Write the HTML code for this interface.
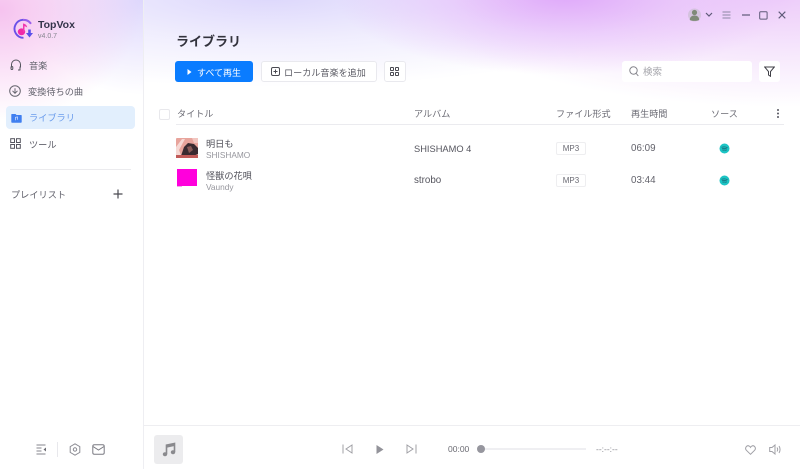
<!DOCTYPE html>
<html lang="ja">
<head>
<meta charset="utf-8">
<style>
html,body{margin:0;padding:0}
body{width:800px;height:469px;overflow:hidden;position:relative;background:#fff;font-family:"Liberation Sans","Noto Sans CJK JP",sans-serif;color:#3a3a45}
div,span,svg{position:absolute;display:block}
.bg{left:0;top:0;width:800px;height:125px;background:
 radial-gradient(ellipse 230px 80px at 565px -5px,rgba(222,165,250,.95),rgba(226,180,250,.5) 50%,rgba(255,255,255,0) 100%),
 radial-gradient(ellipse 360px 112px at 780px -5px,rgba(232,190,248,.8),rgba(240,215,250,.55) 55%,rgba(255,255,255,0) 100%),
 radial-gradient(ellipse 420px 92px at 270px -5px,rgba(218,212,252,.95),rgba(228,224,252,.55) 50%,rgba(255,255,255,0) 100%),
 linear-gradient(#fff,#fff)}
.sb{left:0;top:0;width:143px;height:469px;border-right:1px solid #eeeef2;background:
 radial-gradient(ellipse 140px 110px at 0px 10px,rgba(244,184,236,.85),rgba(255,255,255,0) 100%),
 radial-gradient(ellipse 120px 95px at 143px 0px,rgba(216,208,252,.85),rgba(255,255,255,0) 100%),#fff}
.t{white-space:nowrap;line-height:14px}
.n{font-size:9.200px;color:#62626c}
.h{font-size:9.100px;color:#6a6a73;top:107px}
.ic{fill:none;stroke:#55555f;stroke-width:1}
.tag{width:28px;height:11px;border:1px solid #eeeef0;border-radius:2px;font-size:8px;line-height:11px;text-align:center;color:#6a6a73;left:556px;background:#fff}
</style>
</head>
<body>
<div class="bg"></div>
<div class="sb"></div>

<!-- logo -->
<svg style="left:13px;top:18px" width="22" height="22" viewBox="0 0 22 22">
 <path d="M17.800 5.500A9 9 0 1 0 10.500 19.800" fill="none" stroke="#6a50e8" stroke-width="1.900"/>
 <path d="M10 2A9 9 0 0 1 18 5.800" fill="none" stroke="#9a60ec" stroke-width="1.900"/>
 <ellipse cx="8.500" cy="13.800" rx="3.700" ry="3.400" fill="#f02aa8"/><path d="M10 14V5.500c2 .3 4 1.500 4.200 4-1.300-1-2.400-1.200-2.700-1.200V14z" fill="#f03ab0"/>
 <path d="M15.200 11.500h2.600v3.500h2.200L16.500 19.500 13 15h2.200z" fill="#5b50ea"/>
</svg>
<div class="t" style="left:38px;top:18px;font-size:10.500px;font-weight:bold;color:#34344a">TopVox</div>
<div class="t" style="left:38px;top:30px;font-size:7px;color:#85858f">v4.0.7</div>

<!-- nav -->
<svg class="ic" style="left:10px;top:59px" width="12" height="12" viewBox="0 0 12 12"><path d="M1.500 8.500V5.500a4.500 4.500 0 0 1 9 0v3"/><rect x="1" y="7.500" width="1.800" height="3" rx=".9"/><path d="M10 7.500v3.500H8"/></svg>
<div class="t n" style="left:29px;top:59px">音楽</div>
<svg class="ic" style="left:9px;top:85px;stroke:#66666f" width="12" height="12" viewBox="0 0 12 12"><circle cx="6" cy="6" r="5.300"/><path d="M3.500 5.800L6 8.300l2.500-2.500M6 3.200v5"/></svg>
<div class="t n" style="left:28px;top:85px">変換待ちの曲</div>
<div style="left:6px;top:106px;width:129px;height:23px;background:#e2effd;border-radius:4px"></div>
<svg style="left:11px;top:112px" width="11" height="11" viewBox="0 0 11 11"><path d="M1 2h3.500l1 1H10a.7.7 0 0 1 .7.700V10a.7.7 0 0 1-.7.700H1A.7.7 0 0 1 .3 10V2.700A.7.7 0 0 1 1 2z" fill="#3f7ff0"/><path d="M4.500 8.300V5.300l2-.4v2.800" stroke="#dbe8ff" stroke-width=".7" fill="none"/></svg>
<div class="t n" style="left:29px;top:111px;color:#6a9cec">ライブラリ</div>
<svg class="ic" style="left:10px;top:138px" width="11" height="11" viewBox="0 0 11 11"><rect x=".7" y=".7" width="3.800" height="3.800"/><rect x="6.500" y=".7" width="3.800" height="3.800"/><rect x=".7" y="6.500" width="3.800" height="3.800"/><rect x="6.500" y="6.500" width="3.800" height="3.800"/></svg>
<div class="t n" style="left:29px;top:138px">ツール</div>
<div style="left:10px;top:169px;width:121px;height:1px;background:#ebebee"></div>
<div class="t n" style="left:11px;top:188px">プレイリスト</div>
<svg style="left:113px;top:189px" width="10" height="10" viewBox="0 0 10 10"><path d="M5 .5v9M.5 5h9" stroke="#4a4a52" stroke-width="1.200"/></svg>

<!-- sidebar bottom -->
<svg class="ic" style="left:36px;top:444px;stroke:#85858c" width="11" height="11" viewBox="0 0 11 11"><path d="M.5 1h9M.5 4h5M.5 7h5M.5 10h9"/><path d="M10 3.500L7.500 5.500 10 7.500z" fill="#6b6b72" stroke="none"/></svg>
<div style="left:57px;top:442px;width:1px;height:15px;background:#e8e8ec"></div>
<svg class="ic" style="left:69px;top:443px;stroke:#8a8a92" width="12" height="13" viewBox="0 0 12 13"><path d="M6 .8l4.800 2.800v5.800L6 12.200 1.200 9.400V3.600z"/><circle cx="6" cy="6.500" r="1.700"/></svg>
<svg class="ic" style="left:92px;top:444px;stroke:#7a7a82" width="13" height="11" viewBox="0 0 13 11"><rect x=".8" y=".8" width="11.400" height="9.400" rx="1.500"/><path d="M1 2.500L6.500 6 12 2.500"/></svg>

<!-- header -->
<div class="t" style="left:176px;top:35px;font-size:13px;font-weight:bold;color:#33333d">ライブラリ</div>
<div style="left:175px;top:61px;width:78px;height:21px;background:#0a7cff;border-radius:3px"></div>
<svg style="left:187px;top:69px" width="5" height="6" viewBox="0 0 5 6"><path d="M.5 0L4.500 3 .5 6z" fill="#fff"/></svg>
<div class="t" style="left:197px;top:66px;font-size:9px;color:#fff">すべて再生</div>
<div style="left:261px;top:61px;width:114px;height:19px;background:#fff;border:1px solid #e9e9ee;border-radius:3px"></div>
<svg class="ic" style="left:271px;top:67px;stroke:#4a4a52" width="9" height="9" viewBox="0 0 9 9"><rect x=".5" y=".5" width="8" height="8" rx="1.500"/><path d="M4.500 2.500v4M2.500 4.500h4"/></svg>
<div class="t" style="left:284px;top:66px;font-size:9.100px;color:#5a5a63">ローカル音楽を追加</div>
<div style="left:384px;top:61px;width:20px;height:19px;background:#fff;border:1px solid #e9e9ee;border-radius:3px"></div>
<svg class="ic" style="left:390px;top:67px;stroke:#4a4a52" width="9" height="9" viewBox="0 0 9 9"><rect x=".5" y=".5" width="3" height="3" rx=".5"/><rect x="5.500" y=".5" width="3" height="3" rx=".5"/><rect x=".5" y="5.500" width="3" height="3" rx=".5"/><rect x="5.500" y="5.500" width="3" height="3" rx=".5"/></svg>

<!-- search -->
<div style="left:622px;top:61px;width:130px;height:21px;background:#fff;border-radius:3px"></div>
<svg class="ic" style="left:629px;top:66px;stroke:#85858c" width="10" height="11" viewBox="0 0 10 11"><circle cx="4.500" cy="4.500" r="3.700"/><path d="M7.300 7.500L9.300 10"/></svg>
<div class="t" style="left:643px;top:66px;font-size:9.500px;color:#a5a5ab">検索</div>
<div style="left:759px;top:61px;width:21px;height:21px;background:#fff;border-radius:3px"></div>
<svg class="ic" style="left:764px;top:66px;stroke:#3f3f46" width="11" height="11" viewBox="0 0 11 11"><path d="M.7 1h9.600L6.500 5.500v4.800L4.500 9V5.500z"/></svg>

<!-- window controls -->
<svg style="left:688px;top:8px" width="13" height="14" viewBox="0 0 13 14"><circle cx="6.500" cy="7" r="6.500" fill="#c4bccc" opacity=".6"/><circle cx="6.500" cy="4.500" r="2.600" fill="#7f8a78"/><path d="M1.800 12c0-3 2-4.500 4.700-4.500s4.700 1.500 4.700 4.500c-1.500 1.200-8 1.200-9.400 0z" fill="#7f8a78"/></svg>
<svg class="ic" style="left:705px;top:12px;stroke:#5e5a78;stroke-width:1.200" width="8" height="6" viewBox="0 0 8 6"><path d="M1 1l3 3 3-3"/></svg>
<svg class="ic" style="left:722px;top:11px;stroke:#8d88a4" width="9" height="8" viewBox="0 0 9 8"><path d="M.5 1h8M.5 4h8M.5 7h8"/></svg>
<svg class="ic" style="left:742px;top:14px;stroke:#5e5a78;stroke-width:1.200" width="8" height="2" viewBox="0 0 8 2"><path d="M0 1h8"/></svg>
<svg class="ic" style="left:759px;top:11px;stroke:#5e5a78" width="9" height="9" viewBox="0 0 9 9"><rect x=".7" y=".7" width="7.400" height="7.400" rx="1"/></svg>
<svg class="ic" style="left:778px;top:11px;stroke:#5e5a78;stroke-width:1.100" width="8" height="8" viewBox="0 0 8 8"><path d="M.7.7l6.600 6.600M7.300.7L.7 7.300"/></svg>

<!-- table header -->
<div style="left:159px;top:109px;width:9px;height:9px;border:1px solid #e8e8ec;border-radius:2px;background:#fff"></div>
<div class="t h" style="left:177px">タイトル</div>
<div class="t h" style="left:414px">アルバム</div>
<div class="t h" style="left:556px">ファイル形式</div>
<div class="t h" style="left:631px">再生時間</div>
<div class="t h" style="left:711px">ソース</div>
<svg style="left:776px;top:108px" width="4" height="11" viewBox="0 0 4 11"><circle cx="2" cy="2" r="1" fill="#55555f"/><circle cx="2" cy="5.500" r="1" fill="#55555f"/><circle cx="2" cy="9" r="1" fill="#55555f"/></svg>
<div style="left:176px;top:124px;width:608px;height:1px;background:#ebebef"></div>

<!-- row 1 -->
<svg style="left:176px;top:138px" width="22" height="20" viewBox="0 0 22 20"><rect width="22" height="20" rx="1" fill="#e8a49c"/><path d="M0 20V9l6-8h3L3 12l3 8z" fill="#f6d8d4"/><path d="M5 18l3-9 4-4 6 1 4 4v6l-5 2z" fill="#3a2a30"/><path d="M11 9l4-1 2 4-4 3z" fill="#8a5a58"/><rect y="17" width="22" height="3" fill="#c25a58"/><path d="M16 0h6v5h-4z" fill="#f2c6c0"/></svg>
<div class="t" style="left:206px;top:137px;font-size:9.200px;color:#4f4f58">明日も</div>
<div class="t" style="left:206px;top:148px;font-size:8.300px;color:#96969d">SHISHAMO</div>
<div class="t" style="left:414px;top:142px;font-size:9.300px;color:#55555e">SHISHAMO 4</div>
<div class="tag" style="top:142px">MP3</div>
<div class="t" style="left:631px;top:142px;font-size:9.800px;color:#62626b">06:09</div>
<svg style="left:719px;top:143px" width="11" height="11" viewBox="0 0 11 11"><circle cx="5.500" cy="5.500" r="5" fill="#1cc4c4"/><path d="M2.500 4.300c2-.6 4-.6 6 .3M3 5.800c1.700-.4 3.500-.4 5 .3M3.500 7.200c1.300-.3 2.700-.3 4 .2" stroke="#176a78" stroke-width=".8" fill="none"/></svg>

<!-- row 2 -->
<div style="left:177px;top:169px;width:20px;height:17px;background:#ff00dc"></div>
<div style="left:177px;top:186px;width:5px;height:1px;background:#f2a8e8"></div>
<div class="t" style="left:206px;top:169px;font-size:9.200px;color:#4f4f58">怪獣の花唄</div>
<div class="t" style="left:206px;top:180px;font-size:8.300px;color:#96969d">Vaundy</div>
<div class="t" style="left:414px;top:174px;font-size:9.800px;color:#55555e">strobo</div>
<div class="tag" style="top:174px">MP3</div>
<div class="t" style="left:631px;top:174px;font-size:9.800px;color:#62626b">03:44</div>
<svg style="left:719px;top:175px" width="11" height="11" viewBox="0 0 11 11"><circle cx="5.500" cy="5.500" r="5" fill="#1cc4c4"/><path d="M2.500 4.300c2-.6 4-.6 6 .3M3 5.800c1.700-.4 3.500-.4 5 .3M3.500 7.200c1.300-.3 2.700-.3 4 .2" stroke="#176a78" stroke-width=".8" fill="none"/></svg>

<!-- player -->
<div style="left:144px;top:425px;width:656px;height:1px;background:#eeeef1"></div>
<div style="left:154px;top:435px;width:29px;height:29px;background:#ececee;border-radius:3px"></div>
<svg style="left:162px;top:442px" width="14" height="15" viewBox="0 0 14 15"><path d="M4.500 12V3.200L12.500 1.500v8.500" fill="none" stroke="#8a8a8e" stroke-width="1.600"/><path d="M4.500 3.200L12.500 1.500v2.500L4.500 5.700z" fill="#8a8a8e"/><ellipse cx="3" cy="12.200" rx="2.200" ry="2" fill="#8a8a8e"/><ellipse cx="11" cy="10.200" rx="2.200" ry="2" fill="#8a8a8e"/></svg>
<svg class="ic" style="left:342px;top:444px;stroke:#a0a0a6" width="11" height="10" viewBox="0 0 11 10"><path d="M1 .5v9M10 1L4 5l6 4z"/></svg>
<svg style="left:376px;top:445px" width="8" height="9" viewBox="0 0 8 9"><path d="M.5 0L7.500 4.500.5 9z" fill="#93939a"/></svg>
<svg class="ic" style="left:406px;top:444px;stroke:#a0a0a6" width="11" height="10" viewBox="0 0 11 10"><path d="M10 .5v9M1 1l6 4-6 4z"/></svg>
<div class="t" style="left:448px;top:442px;font-size:8.500px;color:#6a6a72">00:00</div>
<div style="left:480px;top:448px;width:106px;height:2px;background:#efeff2"></div>
<div style="left:477px;top:445px;width:8px;height:8px;border-radius:50%;background:#96969e"></div>
<div class="t" style="left:596px;top:442px;font-size:8.500px;color:#85858c">--:--:--</div>
<svg class="ic" style="left:745px;top:445px;stroke:#a0a0a6" width="11" height="10" viewBox="0 0 11 10"><path d="M5.500 9.300L1.300 5.200C-.5 3 1.800-.3 4.200 1.100c.6.300 1 .8 1.300 1.300.3-.5.700-1 1.300-1.300C9.200-.3 11.500 3 9.700 5.200z"/></svg>
<svg class="ic" style="left:769px;top:444px;stroke:#a0a0a6" width="12" height="11" viewBox="0 0 12 11"><path d="M.7 3.500h2.300L6 1v9L3 7.500H.7z"/><path d="M8 3.500c.8 1.200.8 2.800 0 4M10 2c1.400 2 1.400 5 0 7"/></svg>
</body>
</html>
